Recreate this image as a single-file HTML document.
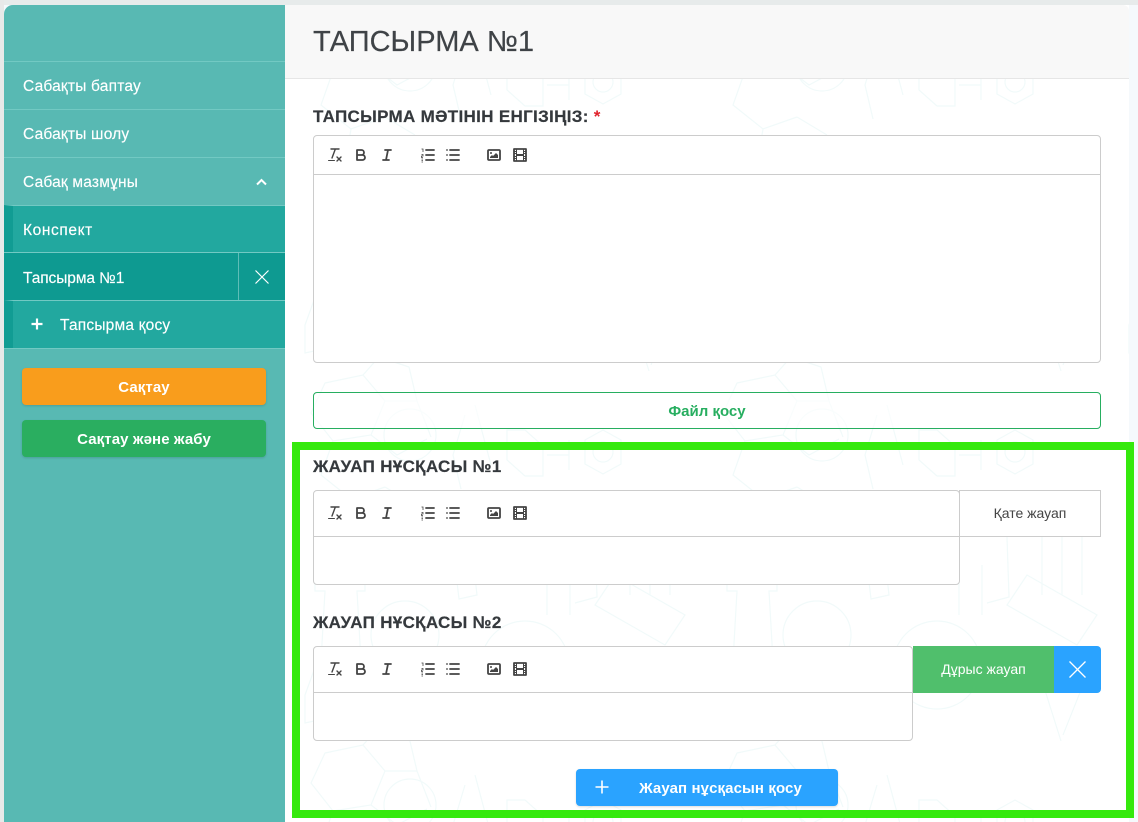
<!DOCTYPE html>
<html lang="kk"><head><meta charset="utf-8"><title>Тапсырма №1</title>
<style>
*{box-sizing:border-box}
html,body{margin:0;padding:0;width:1138px;height:822px;overflow:hidden;background:#f5f9fc;font-family:"Liberation Sans",sans-serif}
.a{position:absolute}
#top{left:0;top:0;width:1138px;height:5px;background:#e7ebeb}
#leftb{left:0;top:0;width:4px;height:822px;background:#e8e9e9}
#side{left:4px;top:5px;width:281px;height:817px;background:#58b9b3;border-top-left-radius:9px}
#main{left:285px;top:5px;width:844px;height:817px;background:#fff}
#head{left:285px;top:5px;width:844px;height:74px;background:#f8f8f8;border-bottom:1px solid #e6e6e6;border-top-right-radius:6px}
h1{margin:0;left:313px;top:24px;font-size:29px;line-height:36px;font-weight:400;color:#3f4347;white-space:nowrap;-webkit-text-stroke:.2px #3f4347}
.row{left:4px;width:281px;height:48px;color:#fff;font-size:15.500px;letter-spacing:.2px;line-height:49px;padding-left:19px;white-space:nowrap;-webkit-text-stroke:.15px #fff}
.bd{border-top:1px solid #72c9c3}
.sub{background:#22a89f;border-left:9px solid #119c93;padding-left:10px}
.btn{border-radius:4px;color:#fff;font-weight:700;font-size:15px;letter-spacing:.1px;text-align:center;white-space:nowrap;box-shadow:0 1px 2px rgba(0,0,0,.14)}
.lab{left:313px;font-size:17px;letter-spacing:.32px;line-height:20px;font-weight:700;color:#35393d;white-space:nowrap;-webkit-text-stroke:.2px #35393d}
.ed{background:#fff;border:1px solid #ccc;border-radius:4px}
.ed i{position:absolute;left:0;right:0;height:1px;background:#ccc;display:block}
.tb{position:absolute;width:216px;height:18px;left:12px}
.s{fill:none;stroke:#444;stroke-width:1.800;stroke-linecap:round;stroke-linejoin:round}
</style></head><body>
<div class="a" id="top"></div><div class="a" id="leftb"></div>
<div class="a" id="main"></div>
<svg class="a" style="left:285px;top:5px" width="844" height="817" viewBox="0 0 844 817">
<defs>
<pattern id="dd" patternUnits="userSpaceOnUse" width="412" height="370" x="0" y="0">
<g fill="none" stroke="#f1fafa" stroke-width="1.200">
<path d="M40 378l38-8 22 26-14 34-38 6-22-28zM78 370l16-18 30 10 8 34-32 0M86 430l26 20 30-16M100 396l32 0 14 36"/>
<path d="M40 8l38-8 22 26-14 34-38 6-22-28zM78 0l16-18 30 10 8 34-32 0M86 60l26 20 30-16M100 26l32 0 14 36M48 66l-12 34 30 24 34-12M100 112l30 18M66 124l-6 36"/>
<circle cx="125" cy="60" r="26"/><path d="M180 40l-12 40 8 34M190 30l16 60"/>
<path d="M240 55h-18v30l18 16h18v-30zM262 80h22M284 65v30M300 65l18-10 18 10v24l-18 10-18-10z"/><circle cx="318" cy="77" r="10"/>
<path d="M10 -40l40 -14 16 30-40 16zM200 -40l40-14 16 30-40 16z"/>
<path d="M170 190l18-6 4 36-18 4zM250 160l50-8 10 10 2 60-22 6M262 190v50M285 190v50"/>
<path d="M30 200h50v16h-8l4 70-40 0 4-70h-10z"/>
<circle cx="120" cy="260" r="34"/><path d="M330 200l70 40-20 30-70-40zM345 150v70M365 150v70M385 150v70"/>
<circle cx="240" cy="290" r="44"/><path d="M220 300q14-36 36-24t4 34M20 320l16-44 40 60-56 12z"/>
<path d="M340 290l24 76M390 300l-24 60"/>
</g></pattern></defs>
<rect width="844" height="817" fill="url(#dd)"/>
</svg>
<div class="a" id="head"></div>
<h1 class="a">ТАПСЫРМА №1</h1>

<div class="a" id="side"></div>
<div class="a row bd" style="top:61px">Сабақты баптау</div>
<div class="a row bd" style="top:109px">Сабақты шолу</div>
<div class="a row bd" style="top:157px">Сабақ мазмұны</div>
<svg class="a" style="left:255px;top:177px" width="13" height="10" viewBox="0 0 13 10"><path d="M2 7.500L6.500 3 11 7.500" fill="none" stroke="#fff" stroke-width="2"/></svg>
<div class="a row sub bd" style="top:205px;height:48px;letter-spacing:.6px">Конспект</div>
<div class="a row bd" style="top:252px;height:49px;background:#0e9a91;line-height:51px;letter-spacing:-.08px">Тапсырма №1</div>
<div class="a" style="left:238px;top:253px;width:1px;height:47px;background:#5fbdb7"></div>
<svg class="a" style="left:254px;top:269px" width="16" height="16" viewBox="0 0 16 16"><path d="M1.500 1.500L14.500 14.500M14.500 1.500L1.500 14.500" stroke="#fff" stroke-width="1.200" fill="none"/></svg>
<div class="a row sub bd" style="top:300px;height:48px;padding-left:47px">Тапсырма қосу</div>
<svg class="a" style="left:30px;top:317px" width="14" height="14" viewBox="0 0 14 14"><path d="M7 1.500V12.500M1.500 7H12.500" stroke="#fff" stroke-width="2.200" fill="none"/></svg>
<div class="a" style="left:4px;top:348px;width:281px;height:1px;background:#72c9c3"></div>
<div class="a btn" style="left:22px;top:368px;width:244px;height:37px;line-height:39px;background:#f99d1c">Сақтау</div>
<div class="a btn" style="left:22px;top:420px;width:244px;height:37px;line-height:39px;background:#2aae60">Сақтау және жабу</div>

<div class="a lab" style="top:107px">ТАПСЫРМА МӘТІНІН ЕНГІЗІҢІЗ: <span style="color:#e0202a;-webkit-text-stroke:0">*</span></div>
<div class="a ed" style="left:313px;top:135px;width:788px;height:228px"><i style="top:38px"></i>
<svg class="tb" style="top:10px" viewBox="0 0 216 18"><use href="#tools"/></svg></div>
<div class="a" style="left:313px;top:392px;width:788px;height:37px;border:1.500px solid #27ae60;border-radius:4px;background:rgba(255,255,255,.6);color:#27ae60;font-weight:700;font-size:15px;line-height:37px;text-align:center">Файл қосу</div>

<div class="a" style="left:292px;top:442px;width:842px;height:376px;border:8.500px solid #35e90d"></div>

<div class="a lab" style="top:457px">ЖАУАП НҰСҚАСЫ №1</div>
<div class="a ed" style="left:313px;top:490px;width:647px;height:95px"><i style="top:45px"></i>
<svg class="tb" style="top:13px" viewBox="0 0 216 18"><use href="#tools"/></svg></div>
<div class="a" style="left:959px;top:490px;width:142px;height:47px;background:#fff;border:1px solid #ccc;color:#444;font-size:14px;line-height:45px;text-align:center">Қате жауап</div>

<div class="a lab" style="top:613px">ЖАУАП НҰСҚАСЫ №2</div>
<div class="a ed" style="left:313px;top:646px;width:600px;height:95px"><i style="top:45px"></i>
<svg class="tb" style="top:13px" viewBox="0 0 216 18"><use href="#tools"/></svg></div>
<div class="a" style="left:913px;top:646px;width:141px;height:47px;background:#50bf6c;color:#fff;font-size:14px;line-height:47px;text-align:center">Дұрыс жауап</div>
<div class="a" style="left:1054px;top:646px;width:47px;height:47px;background:#2aa3ff;border-radius:0 4px 4px 0"></div>
<svg class="a" style="left:1068px;top:660px" width="19" height="19" viewBox="0 0 19 19"><path d="M1.500 1.500L17.500 17.500M17.500 1.500L1.500 17.500" stroke="#fff" stroke-width="1.300" fill="none"/></svg>

<div class="a btn" style="left:576px;top:769px;width:262px;height:37px;line-height:39px;background:#2aa3ff;padding-left:27px">Жауап нұсқасын қосу</div>
<svg class="a" style="left:595px;top:780px" width="14" height="14" viewBox="0 0 14 14"><path d="M7 .5V13.500M.5 7H13.500" stroke="#fff" stroke-width="1.600" fill="none"/></svg>

<svg width="0" height="0" style="position:absolute"><defs><g id="tools">
<g transform="translate(0,0)"><path class="s" style="stroke-width:1.400" d="M5 3H13M6 12L9.350 3M11 11L15 15M15 11L11 15"/><rect x="2" y="14" width="7" height="1" rx=".5" fill="#444"/></g>
<g transform="translate(26,0)"><path class="s" d="M5 4H9.500A2.500 2.500 0 0 1 12 6.500A2.500 2.500 0 0 1 9.500 9H5ZM5 9H10.500A2.500 2.500 0 0 1 13 11.500A2.500 2.500 0 0 1 10.500 14H5Z"/></g>
<g transform="translate(52,0)"><path class="s" d="M7 4H13M5 14H11M8 14L10 4"/></g>
<g transform="translate(93,0)"><path class="s" d="M7 4H15M7 9H15M7 14H15"/><path d="M2.500 3h1.500v3M2.500 8.500h1.500v1.500h-1.500v1.500h1.500M2.500 13h1.500M2.500 14.500h1.500M2.500 16h1.500" fill="none" stroke="#444" stroke-width=".8"/></g>
<g transform="translate(118,0)"><path class="s" d="M6 4H15M6 9H15M6 14H15M3 4H3M3 9H3M3 14H3"/></g>
<g transform="translate(159,0)"><rect class="s" x="3" y="4" width="12" height="10" rx="1"/><circle cx="6" cy="7" r="1" fill="#444"/><path d="M5 12V11L7 9L8 10L11 7L13 9V12Z" fill="#444"/></g>
<g transform="translate(185,0)"><rect class="s" x="3" y="3" width="12" height="12"/><path d="M5 3h1v12h-1zM12 3h1v12h-1zM5 8h8v2h-8zM3 5h3v1h-3zM3 7h3v1h-3zM3 10h3v1h-3zM3 12h3v1h-3zM12 5h3v1h-3zM12 7h3v1h-3zM12 10h3v1h-3zM12 12h3v1h-3z" fill="#444"/></g>
</g></defs></svg>
</body></html>
